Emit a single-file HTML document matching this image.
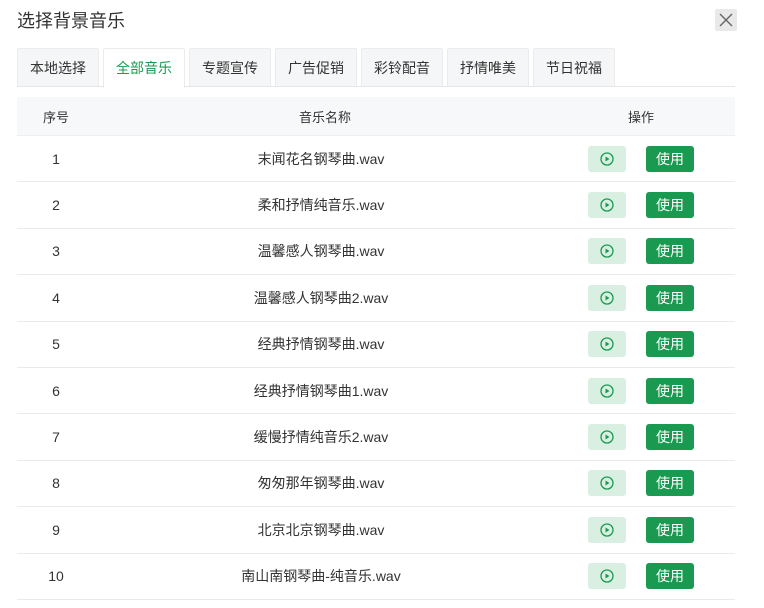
<!DOCTYPE html>
<html><head><meta charset="utf-8"><style>
body{margin:0;width:764px;height:608px;background:#fff;font-family:"Liberation Sans","Noto Sans CJK SC",sans-serif;color:#333;position:relative;overflow:hidden}
.title{position:absolute;left:17px;top:9px;font-size:18px;line-height:24px;color:#333}
.close{position:absolute;left:715px;top:9px;width:22px;height:22px;background:#e9e9e9;border-radius:2px}
.tabs{position:absolute;left:17px;top:48px;width:718px;height:38px;border-bottom:1px solid #e6e6e6}
.tab{position:absolute;top:0;width:80px;height:37px;background:#f5f6f7;border:1px solid #ebebeb;border-bottom:none;font-size:14px;line-height:38px;text-align:center;color:#333;border-radius:2px 2px 0 0}
.tab.on{background:#fff;color:#1a9a50;height:39px}
.table{position:absolute;left:17px;top:97px;width:718px}
.hd{height:38px;background:#f7f8fa;border-bottom:1px solid #eee;position:relative;font-size:13px}
.row{height:45.4px;border-bottom:1px solid #eaeaea;position:relative;font-size:14px}
.c1,.c2,.c3{position:absolute;top:0;height:100%;display:flex;align-items:center;justify-content:center}
.c1{left:0;width:78px}.c2{left:146px;width:316px}.c3{left:570px;width:106px}
.play{position:absolute;left:571px;top:50%;margin-top:-13px;width:38px;height:26px;background:#d8efe2;border-radius:3px;display:flex;align-items:center;justify-content:center}
.use{position:absolute;left:629px;top:50%;margin-top:-13px;width:48px;height:26px;background:#1a9a50;border-radius:3px;color:#fff;font-size:14px;line-height:26px;text-align:center}
</style></head><body>
<div class="title">选择背景音乐</div>
<div class="close"><svg width="22" height="22"><path d="M5 5L17 17M17 5L5 17" stroke="#666" stroke-width="1.4"/></svg></div>
<div class="tabs">
<div class="tab" style="left:0">本地选择</div>
<div class="tab on" style="left:86px">全部音乐</div>
<div class="tab" style="left:172px">专题宣传</div>
<div class="tab" style="left:258px">广告促销</div>
<div class="tab" style="left:344px">彩铃配音</div>
<div class="tab" style="left:430px">抒情唯美</div>
<div class="tab" style="left:516px">节日祝福</div>
</div>
<div class="table">
<div class="hd"><div class="c1">序号</div><div class="c2" style="left:150px">音乐名称</div><div class="c3" style="left:572px;width:104px">操作</div></div>
<div class="row"><div class="c1">1</div><div class="c2">末闻花名钢琴曲.wav</div><div class="play"><svg width="14" height="14"><circle cx="7" cy="7" r="6" fill="none" stroke="#1a9a50" stroke-width="1.3"/><path d="M5.5 4.5L9.5 7L5.5 9.5Z" fill="#1a9a50"/></svg></div><div class="use">使用</div></div>
<div class="row"><div class="c1">2</div><div class="c2">柔和抒情纯音乐.wav</div><div class="play"><svg width="14" height="14"><circle cx="7" cy="7" r="6" fill="none" stroke="#1a9a50" stroke-width="1.3"/><path d="M5.5 4.5L9.5 7L5.5 9.5Z" fill="#1a9a50"/></svg></div><div class="use">使用</div></div>
<div class="row"><div class="c1">3</div><div class="c2">温馨感人钢琴曲.wav</div><div class="play"><svg width="14" height="14"><circle cx="7" cy="7" r="6" fill="none" stroke="#1a9a50" stroke-width="1.3"/><path d="M5.5 4.5L9.5 7L5.5 9.5Z" fill="#1a9a50"/></svg></div><div class="use">使用</div></div>
<div class="row"><div class="c1">4</div><div class="c2">温馨感人钢琴曲2.wav</div><div class="play"><svg width="14" height="14"><circle cx="7" cy="7" r="6" fill="none" stroke="#1a9a50" stroke-width="1.3"/><path d="M5.5 4.5L9.5 7L5.5 9.5Z" fill="#1a9a50"/></svg></div><div class="use">使用</div></div>
<div class="row"><div class="c1">5</div><div class="c2">经典抒情钢琴曲.wav</div><div class="play"><svg width="14" height="14"><circle cx="7" cy="7" r="6" fill="none" stroke="#1a9a50" stroke-width="1.3"/><path d="M5.5 4.5L9.5 7L5.5 9.5Z" fill="#1a9a50"/></svg></div><div class="use">使用</div></div>
<div class="row"><div class="c1">6</div><div class="c2">经典抒情钢琴曲1.wav</div><div class="play"><svg width="14" height="14"><circle cx="7" cy="7" r="6" fill="none" stroke="#1a9a50" stroke-width="1.3"/><path d="M5.5 4.5L9.5 7L5.5 9.5Z" fill="#1a9a50"/></svg></div><div class="use">使用</div></div>
<div class="row"><div class="c1">7</div><div class="c2">缓慢抒情纯音乐2.wav</div><div class="play"><svg width="14" height="14"><circle cx="7" cy="7" r="6" fill="none" stroke="#1a9a50" stroke-width="1.3"/><path d="M5.5 4.5L9.5 7L5.5 9.5Z" fill="#1a9a50"/></svg></div><div class="use">使用</div></div>
<div class="row"><div class="c1">8</div><div class="c2">匆匆那年钢琴曲.wav</div><div class="play"><svg width="14" height="14"><circle cx="7" cy="7" r="6" fill="none" stroke="#1a9a50" stroke-width="1.3"/><path d="M5.5 4.5L9.5 7L5.5 9.5Z" fill="#1a9a50"/></svg></div><div class="use">使用</div></div>
<div class="row"><div class="c1">9</div><div class="c2">北京北京钢琴曲.wav</div><div class="play"><svg width="14" height="14"><circle cx="7" cy="7" r="6" fill="none" stroke="#1a9a50" stroke-width="1.3"/><path d="M5.5 4.5L9.5 7L5.5 9.5Z" fill="#1a9a50"/></svg></div><div class="use">使用</div></div>
<div class="row"><div class="c1">10</div><div class="c2">南山南钢琴曲-纯音乐.wav</div><div class="play"><svg width="14" height="14"><circle cx="7" cy="7" r="6" fill="none" stroke="#1a9a50" stroke-width="1.3"/><path d="M5.5 4.5L9.5 7L5.5 9.5Z" fill="#1a9a50"/></svg></div><div class="use">使用</div></div>
</div>
</body></html>
